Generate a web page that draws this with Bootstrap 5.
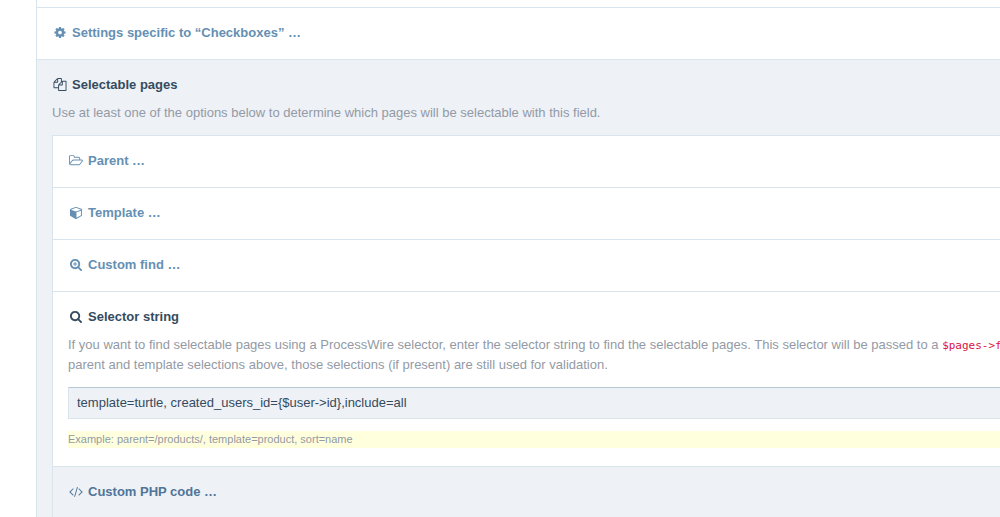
<!DOCTYPE html>
<html lang="en">
<head>
<meta charset="utf-8">
<meta name="viewport" content="width=device-width, initial-scale=1">
<title>Field settings</title>
<link href="https://cdn.jsdelivr.net/npm/bootstrap@5.3.0/dist/css/bootstrap.min.css" rel="stylesheet">
<style>
:root { --line: #dae4ec; --panel: #eef1f6; --link: #6590b3; --ink: #354b60; --muted: #939aa5; }
body { font-family: "Liberation Sans", Arial, sans-serif; font-size: 13px; line-height: 20px; color: var(--muted); background: #fff; overflow: hidden; }
/* the form is wider than the window and runs off its right edge */
.settings { margin-left: 36px; margin-right: -96px; padding-top: 7px; border-left: 1px solid var(--line); }
.field-row { border-bottom: 1px solid var(--line); padding: 14px 15px 16px; }
.first-row { border-top: 1px solid var(--line); }
.field-title { display: flex; align-items: center; gap: 4px; margin: 0; font-size: 13px; line-height: 21px; font-weight: 700; color: var(--ink); text-decoration: none; white-space: nowrap; }
a.field-title { color: var(--link); }
a.field-title.darker { color: #4f7599; }
.field-title svg { width: 16px; height: 13px; fill: currentColor; flex: none; }
.shaded { background: var(--panel); }
.inner { border: 1px solid var(--line); border-bottom: 0; background: #fff; margin-top: 12px; }
.desc { margin: 8px 0 0; }
.desc code { font-family: "DejaVu Sans Mono", monospace; font-size: 11px; line-height: 12px; color: #dd1144; }
.selector-input { font-size: 13px; line-height: 20px; color: var(--ink); background: var(--panel); border: 1px solid var(--line); border-top-color: #b4c8d6; border-radius: 0; padding: 5px 8px; margin-top: 12px; }
.hint { background: #ffffdd; font-size: 11px; line-height: 17px; margin: 12px 0 2px; }
</style>
</head>
<body>
<main class="settings">
  <section class="field-row first-row">
    <a class="field-title" href="#checkboxes"><svg viewBox="0 0 1792 1792" aria-hidden="true"><path d="M1152 896q0-106-75-181t-181-75-181 75-75 181 75 181 181 75 181-75 75-181zm512-109v222q0 12-8 23t-20 13l-185 28q-19 54-39 91 35 50 107 138 10 12 10 25t-9 23q-27 37-99 108t-94 71q-12 0-26-9l-138-108q-44 23-91 38-16 136-29 186-7 28-36 28h-222q-14 0-24.500-8.500t-11.500-21.500l-28-184q-49-16-90-37l-141 107q-10 9-25 9-14 0-25-11-126-114-165-168-7-10-7-23 0-12 8-23 15-21 51-66.500t54-70.500q-27-50-41-99l-183-27q-13-2-21-12.500t-8-23.500v-222q0-12 8-23t19-13l186-28q14-46 39-92-40-57-107-138-10-12-10-24 0-10 9-23 26-36 98.500-107.500t94.500-71.500q13 0 26 10l138 107q44-23 91-38 16-136 29-186 7-28 36-28h222q14 0 24.500 8.500t11.500 21.500l28 184q49 16 90 37l142-107q9-9 24-9 13 0 25 10 129 119 165 170 7 8 7 22 0 12-8 23-15 21-51 66.500t-54 70.500q26 50 41 98l183 28q13 2 21 12.500t8 23.500z"/></svg>Settings specific to “Checkboxes” …</a>
  </section>
  <section class="field-row shaded border-bottom-0" id="selectable">
    <h2 class="field-title"><svg viewBox="0 0 1792 1792" aria-hidden="true"><path d="M1696 384q40 0 68 28t28 68v1216q0 40-28 68t-68 28h-960q-40 0-68-28t-28-68v-288h-544q-40 0-68-28t-28-68v-672q0-40 20-88t48-76l408-408q28-28 76-48t88-20h416q40 0 68 28t28 68v328q68-40 128-40h416zm-544 213l-299 299h299v-299zm-640-384l-299 299h299v-299zm196 647l316-316v-416h-384v416q0 40-28 68t-68 28h-416v640h512v-256q0-40 20-88t48-76zm956 804v-1152h-384v416q0 40-28 68t-68 28h-416v640h896z"/></svg>Selectable pages</h2>
    <p class="desc">Use at least one of the options below to determine which pages will be selectable with this field.</p>
    <div class="inner">
      <section class="field-row">
        <a class="field-title" href="#parent"><svg viewBox="64 0 1920 1792" aria-hidden="true"><path d="M1845 931q0-35-53-35h-1088q-40 0-85.500 21.500t-71.500 52.500l-294 363q-18 24-18 40 0 35 53 35h1088q40 0 86-22t71-53l294-363q18-22 18-39zm-1141-163h768v-160q0-40-28-68t-68-28h-576q-40 0-68-28t-28-68v-64q0-40-28-68t-68-28h-320q-40 0-68 28t-28 68v853l256-315q44-53 116-87.500t140-34.500zm1269 163q0 62-46 120l-295 363q-43 53-116 87.500t-140 34.500h-1088q-92 0-158-66t-66-158v-960q0-92 66-158t158-66h320q92 0 158 66t66 158v32h544q92 0 158 66t66 158v160h192q54 0 99 24.500t67 70.500q15 32 15 68z"/></svg>Parent …</a>
      </section>
      <section class="field-row">
        <a class="field-title" href="#template"><svg viewBox="0 0 1664 1792" aria-hidden="true"><path d="M896 1629l640-349v-636l-640 233v752zm-64-865l698-254-698-254-698 254zm832-252v768q0 35-18 65t-49 47l-704 384q-28 16-61 16t-61-16l-704-384q-31-17-49-47t-18-65v-768q0-40 23-73t61-47l704-256q22-8 44-8t44 8l704 256q38 14 61 47t23 73z"/></svg>Template …</a>
      </section>
      <section class="field-row">
        <a class="field-title" href="#find"><svg viewBox="0 0 1792 1792" aria-hidden="true"><path d="M1216 832q0-185-131.500-316.500t-316.500-131.500-316.500 131.500-131.500 316.500 131.500 316.500 316.500 131.500 316.500-131.500 131.500-316.500zm512 832q0 52-38 90t-90 38q-54 0-90-38l-343-342q-179 124-399 124-143 0-273.500-55.500t-225-150-150-225-55.500-273.500 55.500-273.500 150-225 225-150 273.500-55.500 273.500 55.500 225 150 150 225 55.500 273.500q0 220-124 399l343 343q37 37 37 90zM704 544h128v224h224v128h-224v224h-128v-224h-224v-128h224z"/></svg>Custom find …</a>
      </section>
      <section class="field-row">
        <label class="field-title" for="selector"><svg viewBox="0 0 1792 1792" aria-hidden="true"><path d="M1216 832q0-185-131.500-316.500t-316.500-131.500-316.500 131.500-131.500 316.500 131.500 316.500 316.500 131.500 316.500-131.500 131.500-316.500zm512 832q0 52-38 90t-90 38q-54 0-90-38l-343-342q-179 124-399 124-143 0-273.500-55.500t-225-150-150-225-55.500-273.500 55.500-273.500 150-225 225-150 273.500-55.500 273.500 55.500 225 150 150 225 55.500 273.500q0 220-124 399l343 343q37 37 37 90z"/></svg>Selector string</label>
        <p class="desc text-nowrap">If you want to find selectable pages using a ProcessWire selector, enter the selector string to find the selectable pages. This selector will be passed to a <code>$pages-&gt;find()</code><br>parent and template selections above, those selections (if present) are still used for validation.</p>
        <input class="form-control selector-input" id="selector" type="text" value="template=turtle, created_users_id={$user-&gt;id},include=all">
        <p class="hint">Example: parent=/products/, template=product, sort=name</p>
      </section>
      <section class="field-row shaded">
        <a class="field-title darker" href="#php"><svg viewBox="0 0 1920 1792" aria-hidden="true"><path d="M617 1399l-50 50q-10 10-23 10t-23-10l-466-466q-10-10-10-23t10-23l466-466q10-10 23-10t23 10l50 50q10 10 10 23t-10 23l-393 393 393 393q10 10 10 23t-10 23zm591-1067l-373 1291q-4 13-15.500 19.500t-23.500 2.500l-62-17q-13-4-19.500-15.500t-2.500-24.500l373-1291q4-13 15.500-19.500t23.500-2.500l62 17q13 4 19.500 15.500t2.500 24.500zm657 651l-466 466q-10 10-23 10t-23-10l-50-50q-10-10-10-23t10-23l393-393-393-393q-10-10-10-23t10-23l50-50q10-10 23-10t23 10l466 466q10 10 10 23t-10 23z"/></svg>Custom PHP code …</a>
      </section>
    </div>
  </section>
</main>
<script src="https://cdn.jsdelivr.net/npm/bootstrap@5.3.0/dist/js/bootstrap.bundle.min.js"></script>
</body>
</html>
